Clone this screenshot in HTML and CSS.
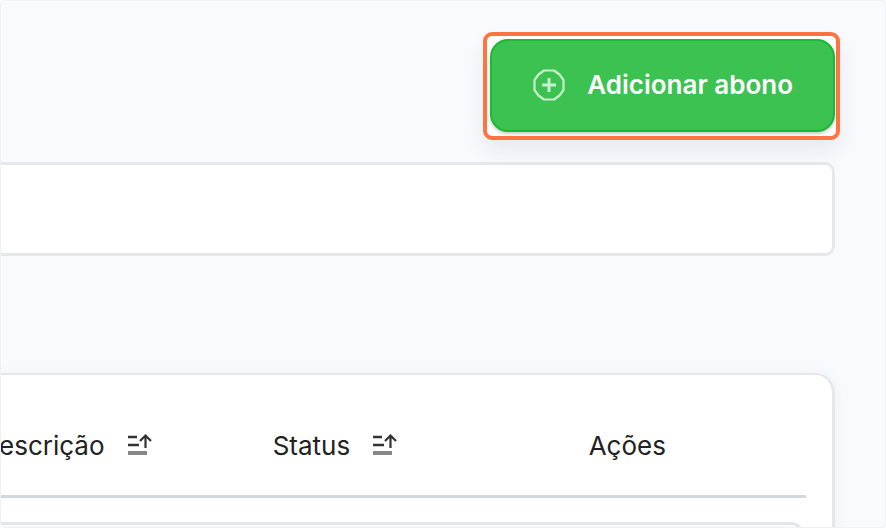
FILE: index.html
```html
<!DOCTYPE html>
<html lang="pt-BR">
<head>
<meta charset="utf-8"/>
<meta name="viewport" content="width=device-width, initial-scale=1">
<title>Abonos</title>
<link rel="stylesheet" href="styles.css">
</head>
<body>
<div id="base">
    <div id="header">
        <div class="highlight">
            <button type="button" class="addbtn">
                <svg width="34" height="34" viewBox="0 0 34 34" fill="none" stroke="currentColor" aria-hidden="true">
                    <path d="M12 2.500h10L27.500 6.500l4 5.500v10l-4 5.500L22 31.500H12L6.500 27.500l-4-5.500V12l4-5.500z" stroke-width="2.2" stroke-linejoin="round"/>
                    <path d="M17 10v14M10 17h14" stroke-width="3"/>
                </svg>
                <span>Adicionar abono</span>
            </button>
        </div>
    </div>
    <input type="text" class="search" aria-label="Pesquisar">
    <div id="list">
        <table>
            <colgroup><col class="desc"><col class="status"><col></colgroup>
            <thead>
                <tr>
                    <th scope="col"><div class="sort">escrição
                        <svg width="26" height="24" viewBox="0 0 26 24" fill="none" stroke="#333" aria-hidden="true">
                            <path d="M1 4h9M1 12h11" stroke-width="2.4"/>
                            <path d="M1 20h19" stroke="#888" stroke-width="4"/>
                            <path d="M18.500 15V2.500M13 8l5.500-5.500L24 8" stroke-width="2.2"/>
                        </svg></div></th>
                    <th scope="col"><div class="sort">Status
                        <svg width="26" height="24" viewBox="0 0 26 24" fill="none" stroke="#333" aria-hidden="true">
                            <path d="M1 4h9M1 12h11" stroke-width="2.4"/>
                            <path d="M1 20h19" stroke="#888" stroke-width="4"/>
                            <path d="M18.500 15V2.500M13 8l5.500-5.500L24 8" stroke-width="2.2"/>
                        </svg></div></th>
                    <th scope="col">Ações</th>
                </tr>
            </thead>
            <tbody>
                <tr><td></td><td></td><td></td></tr>
            </tbody>
        </table>
    </div>
</div>
</body>
</html>
```
FILE: styles.css
```css
* {
    box-sizing:border-box;
}
html {
    font-family: Inter, "Liberation Sans", sans-serif;
    font-size:26px;
    color:#222;
}
body {
    margin:0;
    background:#fff;
}
#base {
    height:100vh;
    padding:31px 50px 0 0;
    border:1px solid #f0f1f5;
    border-radius:4px;
    background:#f9fafe;
    overflow:hidden;
}
#header {
    display:flex;
    justify-content:flex-end;
    margin-right:-5px;
}
.highlight {
    padding:3px 1px 4px 3px;
    border:4px solid #ff7440;
    border-radius:9px;
    background:#fff;
    box-shadow:0 12px 20px rgba(50,50,70,0.08);
}
.addbtn {
    display:flex;
    align-items:center;
    gap:21px;
    height:93px;
    padding:0 40px 2px;
    border:2px solid #18bb32;
    border-radius:18px;
    background:#3bc250;
    color:#fff;
    font-family:inherit;
    font-size:26px;
    font-weight:600;
    box-shadow:0 2px 3px rgba(0,0,0,0.2);
}
.addbtn svg {
    color:#c8f0ce;
}
.search {
    display:block;
    width:100%;
    height:94px;
    margin-top:22px;
    padding:0 24px;
    border:3px solid #e6e8ec;
    border-left:0;
    border-radius:0 10px 10px 0;
    background:#fff;
    font:inherit;
}
#list {
    height:400px;
    margin-top:117px;
    padding-right:26px;
    border:solid #e6e7eb;
    border-width:2px 3px 0 0;
    border-radius:0 20px 0 0;
    background:#fff;
    box-shadow:0 0 14px rgba(50,50,80,0.05);
}
table {
    width:100%;
    table-layout:fixed;
    border-collapse:separate;
    border-spacing:0 24px;
}
.desc {
    width:34%;
}
.status {
    width:39%;
}
th {
    height:99px;
    padding:0 0 4px;
    border-bottom:3px solid #d3d8de;
    text-align:left;
    font-weight:400;
}
.sort {
    display:flex;
    align-items:center;
    gap:22px;
    margin-left:-2px;
}
td {
    height:90px;
    border-top:3px solid #e3e6eb;
}
td:last-child {
    border-right:3px solid #e3e6eb;
    border-top-right-radius:16px;
}
```
